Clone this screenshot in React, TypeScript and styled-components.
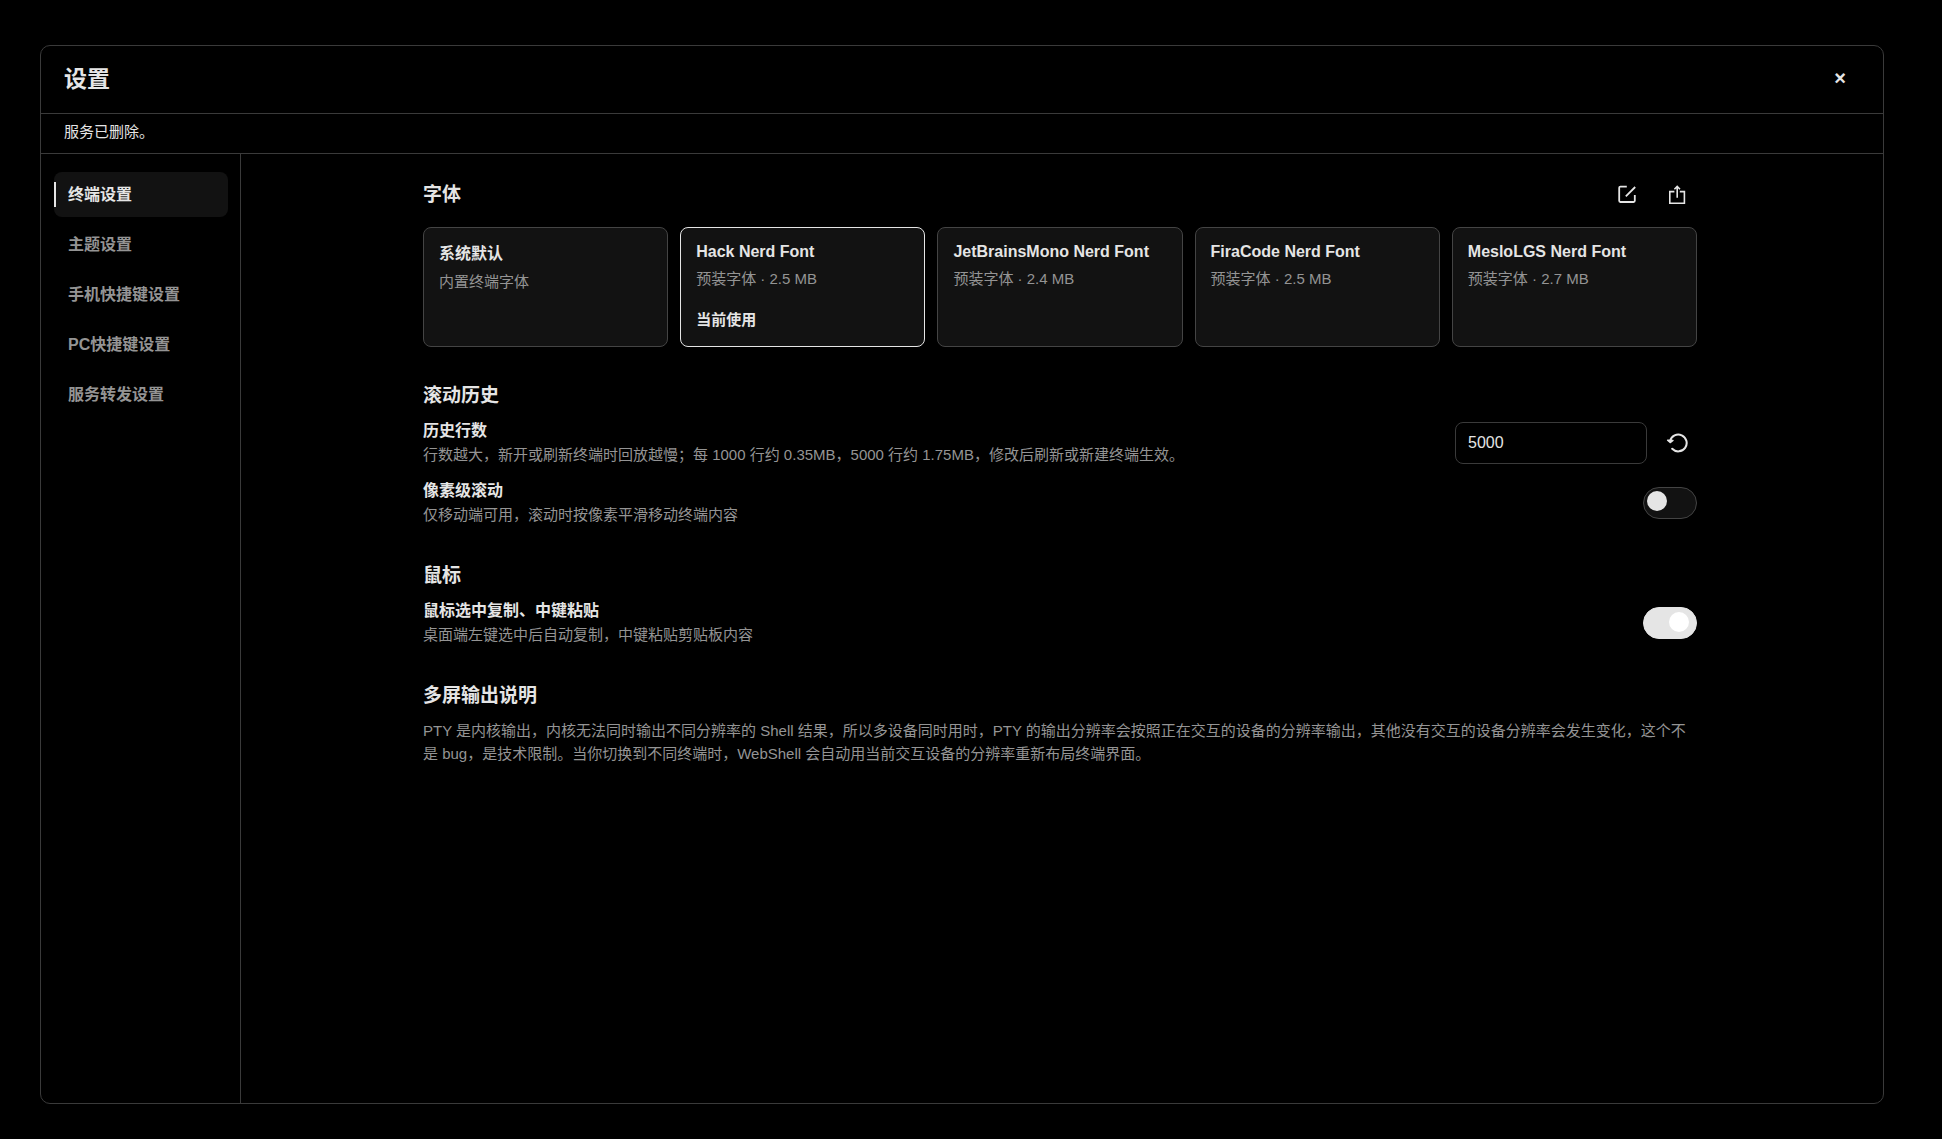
import React, { useState } from "react";
import styled, { createGlobalStyle } from "styled-components";

const color = {
  bg: "#000000",
  surface: "#121212",
  line: "#3a3a3a",
  cardLine: "#444444",
  text: "#e5e5e5",
  muted: "#949494",
};

const GlobalStyle = createGlobalStyle`
  *, *::before, *::after { box-sizing: border-box; }
  body {
    margin: 0;
    background: ${color.bg};
    color: ${color.text};
    font-family: "Liberation Sans", "Noto Sans CJK SC", sans-serif;
    font-size: 15px;
  }
  button, input { font: inherit; color: inherit; }
  h1, h2, p { margin: 0; }
`;

const Backdrop = styled.div`
  display: flex;
  min-height: 100vh;
  padding: 45px 58px 35px 40px;
`;

const Dialog = styled.div`
  flex: 1;
  min-width: 0;
  display: flex;
  flex-direction: column;
  border: 1px solid ${color.line};
  border-radius: 10px;
  overflow: hidden;
`;

const Header = styled.header`
  display: flex;
  align-items: center;
  justify-content: space-between;
  height: 68px;
  padding: 0 23px 2px;
  border-bottom: 1px solid ${color.line};
`;

const DialogTitle = styled.h1`
  font-size: 23px;
  line-height: 32px;
  font-weight: 700;
`;

const IconButton = styled.button`
  display: grid;
  place-items: center;
  flex: none;
  width: 40px;
  height: 40px;
  padding: 0;
  border: 0;
  border-radius: 8px;
  background: none;
  cursor: pointer;
`;

const CloseButton = styled(IconButton)`
  padding-bottom: 2px;
  font-size: 20px;
  line-height: 20px;
  font-weight: 700;
`;

const Status = styled.div`
  padding: 6px 23px 9px;
  line-height: 24px;
  border-bottom: 1px solid ${color.line};
`;

const Body = styled.div`
  flex: 1;
  display: flex;
  min-height: 0;
`;

const Nav = styled.nav`
  flex: none;
  display: flex;
  flex-direction: column;
  gap: 5px;
  width: 200px;
  padding: 18px 12px 18px 13px;
  border-right: 1px solid ${color.line};
`;

const NavItem = styled.button<{ $active: boolean }>`
  position: relative;
  height: 45px;
  padding: 0 14px 4px;
  border: 0;
  border-radius: 8px;
  background: ${(p) => (p.$active ? color.surface : "transparent")};
  color: ${(p) => (p.$active ? color.text : color.muted)};
  font-size: 16px;
  font-weight: 700;
  text-align: left;
  cursor: pointer;

  &::before {
    content: "";
    display: ${(p) => (p.$active ? "block" : "none")};
    position: absolute;
    left: 0;
    top: 10px;
    bottom: 10px;
    width: 2px;
    background: ${color.text};
  }
`;

const Main = styled.main`
  flex: 1;
  min-width: 0;
  padding: 21px 22px 21px 18px;
`;

const Column = styled.div`
  display: flex;
  flex-direction: column;
  gap: 36px;
  max-width: 1274px;
  margin: 0 auto;
`;

const Section = styled.section`
  display: flex;
  flex-direction: column;
`;

const SectionHead = styled.div`
  display: flex;
  align-items: center;
  justify-content: space-between;
  margin-bottom: 12px;
`;

const SectionTitle = styled.h2`
  font-size: 19px;
  line-height: 26px;
  font-weight: 700;
`;

const SectionBody = styled.div`
  display: flex;
  flex-direction: column;
  gap: 12px;
  margin-top: 10px;
`;

const Actions = styled.div`
  display: flex;
  align-items: center;
  gap: 10px;
`;

const FontGrid = styled.div`
  display: grid;
  grid-template-columns: repeat(5, minmax(0, 1fr));
  gap: 12px;
`;

const FontCard = styled.button<{ $selected: boolean }>`
  display: flex;
  flex-direction: column;
  align-items: flex-start;
  height: 120px;
  padding: 14px 15px;
  border: 1px solid ${(p) => (p.$selected ? color.text : color.cardLine)};
  border-radius: 8px;
  background: ${color.surface};
  text-align: left;
  cursor: pointer;
`;

const FontName = styled.span<{ $tall: boolean }>`
  font-size: 16px;
  line-height: ${(p) => (p.$tall ? "23px" : "20px")};
  font-weight: 700;
`;

const FontMeta = styled.span`
  margin-top: 5px;
  line-height: 24px;
  color: ${color.muted};
`;

const FontState = styled.span`
  margin-top: auto;
  line-height: 24px;
  font-weight: 700;
`;

const Row = styled.div`
  display: flex;
  align-items: center;
  justify-content: space-between;
  gap: 24px;
`;

const RowText = styled.div`
  display: flex;
  flex-direction: column;
  line-height: 24px;
`;

const RowLabel = styled.label`
  font-size: 16px;
  font-weight: 700;
`;

const Hint = styled.p`
  color: ${color.muted};
`;

const Paragraph = styled.p`
  line-height: 23px;
  color: ${color.muted};
`;

const NumberInput = styled.input`
  width: 192px;
  height: 42px;
  padding: 0 12px;
  border: 1px solid ${color.line};
  border-radius: 8px;
  outline: 0;
  background: ${color.bg};
  font-size: 16px;
`;

const Switch = styled.input`
  appearance: none;
  flex: none;
  display: flex;
  width: 54px;
  height: 32px;
  margin: 0;
  padding: 3px;
  border: 1px solid ${color.cardLine};
  border-radius: 16px;
  background: ${color.surface};
  cursor: pointer;

  &::before {
    content: "";
    width: 20px;
    height: 20px;
    border-radius: 50%;
    background: ${color.text};
  }
  &:checked {
    padding: 4px 7px;
    justify-content: flex-end;
    border-color: ${color.text};
    background: ${color.text};
  }
  &:checked::before { background: #ffffff; }
`;

const EditIcon = () => (
  <svg width="20" height="20" viewBox="0 0 20 20" fill="none" stroke="currentColor" strokeWidth="1.8" aria-hidden="true">
    <path d="M9.8 1.6H3.4Q2.2 1.6 2.2 2.8v13q0 1.2 1.2 1.2h13.2q1.2 0 1.2-1.2V10M8.8 11.4 18.2 2" />
  </svg>
);

const ShareIcon = () => (
  <svg width="20" height="20" viewBox="0 0 20 20" fill="none" stroke="currentColor" strokeWidth="1.6" aria-hidden="true">
    <path d="M7.4 6.6H2.8v11.6h14.6V6.6h-4.6M10.2 12.8V1.6M7.4 4.2l2.8-2.8L13 4.2" />
  </svg>
);

const ResetIcon = () => (
  <svg width="22" height="22" viewBox="0 0 22 22" fill="none" stroke="currentColor" strokeWidth="2" strokeLinecap="round" strokeLinejoin="round" aria-hidden="true">
    <path d="M6.2 16.8A8.4 8.4 0 1 0 4.1 9" />
    <path d="M1.6 8.2 4.2 10.6 7 8.4z" fill="currentColor" strokeWidth="1.4" />
  </svg>
);

const navItems = ["终端设置", "主题设置", "手机快捷键设置", "PC快捷键设置", "服务转发设置"];

const fonts = [
  { name: "系统默认", meta: "内置终端字体", builtin: true },
  { name: "Hack Nerd Font", meta: "预装字体 · 2.5 MB", builtin: false },
  { name: "JetBrainsMono Nerd Font", meta: "预装字体 · 2.4 MB", builtin: false },
  { name: "FiraCode Nerd Font", meta: "预装字体 · 2.5 MB", builtin: false },
  { name: "MesloLGS Nerd Font", meta: "预装字体 · 2.7 MB", builtin: false },
];

export default function App() {
  const [tab, setTab] = useState(0);
  const [font, setFont] = useState(1);
  const [lines, setLines] = useState("5000");

  return (
    <>
      <GlobalStyle />
      <Backdrop>
        <Dialog role="dialog" aria-labelledby="dialog-title">
          <Header>
            <DialogTitle id="dialog-title">设置</DialogTitle>
            <CloseButton type="button" aria-label="关闭">×</CloseButton>
          </Header>
          <Status role="status">服务已删除。</Status>
          <Body>
            <Nav>
              {navItems.map((item, i) => (
                <NavItem key={item} type="button" $active={i === tab} onClick={() => setTab(i)}>
                  {item}
                </NavItem>
              ))}
            </Nav>
            <Main>
              <Column>
                <Section>
                  <SectionHead>
                    <SectionTitle>字体</SectionTitle>
                    <Actions>
                      <IconButton type="button" aria-label="编辑"><EditIcon /></IconButton>
                      <IconButton type="button" aria-label="上传"><ShareIcon /></IconButton>
                    </Actions>
                  </SectionHead>
                  <FontGrid>
                    {fonts.map((f, i) => (
                      <FontCard key={f.name} type="button" $selected={i === font} onClick={() => setFont(i)}>
                        <FontName $tall={f.builtin}>{f.name}</FontName>
                        <FontMeta>{f.meta}</FontMeta>
                        {i === font && <FontState>当前使用</FontState>}
                      </FontCard>
                    ))}
                  </FontGrid>
                </Section>

                <Section>
                  <SectionTitle>滚动历史</SectionTitle>
                  <SectionBody>
                    <Row>
                      <RowText>
                        <RowLabel htmlFor="history">历史行数</RowLabel>
                        <Hint>行数越大，新开或刷新终端时回放越慢；每 1000 行约 0.35MB，5000 行约 1.75MB，修改后刷新或新建终端生效。</Hint>
                      </RowText>
                      <Actions>
                        <NumberInput id="history" inputMode="numeric" value={lines} onChange={(e) => setLines(e.target.value)} />
                        <IconButton type="button" aria-label="重置" onClick={() => setLines("5000")}><ResetIcon /></IconButton>
                      </Actions>
                    </Row>
                    <Row>
                      <RowText>
                        <RowLabel htmlFor="pixel-scroll">像素级滚动</RowLabel>
                        <Hint>仅移动端可用，滚动时按像素平滑移动终端内容</Hint>
                      </RowText>
                      <Switch id="pixel-scroll" type="checkbox" role="switch" />
                    </Row>
                  </SectionBody>
                </Section>

                <Section>
                  <SectionTitle>鼠标</SectionTitle>
                  <SectionBody>
                    <Row>
                      <RowText>
                        <RowLabel htmlFor="mouse-copy">鼠标选中复制、中键粘贴</RowLabel>
                        <Hint>桌面端左键选中后自动复制，中键粘贴剪贴板内容</Hint>
                      </RowText>
                      <Switch id="mouse-copy" type="checkbox" role="switch" defaultChecked />
                    </Row>
                  </SectionBody>
                </Section>

                <Section>
                  <SectionTitle>多屏输出说明</SectionTitle>
                  <SectionBody>
                    <Paragraph>
                      PTY 是内核输出，内核无法同时输出不同分辨率的 Shell 结果，所以多设备同时用时，PTY 的输出分辨率会按照正在交互的设备的分辨率输出，其他没有交互的设备分辨率会发生变化，这个不是 bug，是技术限制。当你切换到不同终端时，WebShell 会自动用当前交互设备的分辨率重新布局终端界面。
                    </Paragraph>
                  </SectionBody>
                </Section>
              </Column>
            </Main>
          </Body>
        </Dialog>
      </Backdrop>
    </>
  );
}
